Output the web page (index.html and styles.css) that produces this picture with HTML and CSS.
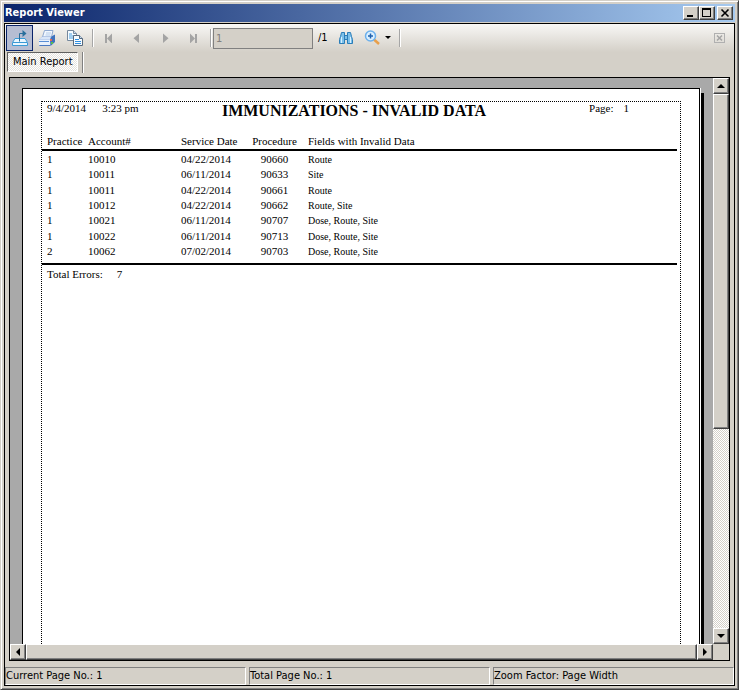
FILE: index.html
```html
<!DOCTYPE html>
<html lang="en">
<head>
    <meta charset="UTF-8">
    <meta name="viewport" content="width=device-width, initial-scale=1.0">
    <title>Report Viewer</title>
    <link rel="stylesheet" href="styles.css">
</head>
<body>
    <div class="window">
        <header class="titlebar">
            <h1>Report Viewer</h1>
            <div class="window-buttons">
                <button class="win-btn" aria-label="Minimize">
                    <svg width="12" height="10" shape-rendering="crispEdges"><rect x="2" y="7" width="6" height="2"/></svg>
                </button>
                <button class="win-btn" aria-label="Maximize">
                    <svg width="12" height="10" shape-rendering="crispEdges"><path d="M1 0h9v9h-9z M2 2v6h7v-6z" fill-rule="evenodd"/></svg>
                </button>
                <button class="win-btn close" aria-label="Close">
                    <svg width="12" height="10"><path d="M2.500 1.500l7 7M9.500 1.500l-7 7" stroke="#000" stroke-width="1.600"/></svg>
                </button>
            </div>
        </header>

        <main class="client">
            <!-- Toolbar -->
            <div class="toolbar">
                <button class="tool active" aria-label="Export Report">
                    <svg width="18" height="18" viewBox="0 0 18 18">
                        <path d="M4 9.500h10l2.500 4v3h-15v-3z" fill="#eaf6ff" stroke="#3a9ad6"/>
                        <path d="M2 13.500h14" stroke="#3a9ad6"/>
                        <path d="M8.500 12.500v-8h4" fill="none" stroke="#2a6f9c"/>
                        <path d="M11.500 1l4 3.500-4 3.500z" fill="#2a6f9c"/>
                    </svg>
                </button>
                <button class="tool" aria-label="Print Report">
                    <svg width="18" height="18" viewBox="0 0 18 18">
                        <path d="M4.500 8l2-6.500h8.500l-1.500 6.500z" fill="#f2f8ff" stroke="#8fa9d0"/>
                        <path d="M8 4h5M7.500 6h5" stroke="#b4cbe8"/>
                        <path d="M1 10.500l3-3h9l3.500-1.500v7l-4 4h-11.500z" fill="#a9c0e6"/>
                        <path d="M1 10.500l3-2.500h8.500l-0.500 2.500z" fill="#d9e6f8"/>
                        <path d="M1 11h11v5h-11z" fill="#e9f1fb"/>
                        <path d="M1 12.500h10" stroke="#5a8fd4"/>
                        <path d="M1.500 16.500h10.500" stroke="#4a79c0"/>
                        <path d="M12 10.500l1.500-3 3.500-2v7.500l-4.500 4z" fill="#3f72bc"/>
                        <rect x="12" y="10" width="2" height="2" fill="#e86a50"/>
                        <rect x="13" y="13" width="2" height="2" fill="#58c050"/>
                    </svg>
                </button>
                <button class="tool" aria-label="Copy">
                    <svg width="18" height="18" viewBox="0 0 18 18">
                        <path d="M1.500 1.500h6l3 3v7h-9z" fill="#f6fbff" stroke="#76889c"/>
                        <path d="M7.500 1.500v3h3" fill="#c8dcf0" stroke="#76889c"/>
                        <path d="M3 5h3M3 7h5M3 9h5" stroke="#4a9fe0"/>
                        <path d="M7.500 6.500h6l3 3v7h-9z" fill="#f6fbff" stroke="#56687c"/>
                        <path d="M13.500 6.500v3h3" fill="#c8dcf0" stroke="#56687c"/>
                        <path d="M9 10.500h4M9 12.500h6M9 14.500h6" stroke="#2f8fe0"/>
                    </svg>
                </button>
                <span class="separator"></span>
                <button class="tool" aria-label="First Page" disabled>
                    <svg width="10" height="10"><path d="M2 1v9" stroke="#a4a4a4" stroke-width="2"/><path d="M8 0.500v10L3 5.500z" fill="#a4a4a4"/></svg>
                </button>
                <button class="tool" aria-label="Previous Page" disabled>
                    <svg width="10" height="10"><path d="M7 0.500v9.500L1.500 5.250z" fill="#a4a4a4"/></svg>
                </button>
                <button class="tool" aria-label="Next Page" disabled>
                    <svg width="10" height="10"><path d="M3 0.500v9.500l5.500-4.750z" fill="#a4a4a4"/></svg>
                </button>
                <button class="tool" aria-label="Last Page" disabled>
                    <svg width="10" height="10"><path d="M2 0.500v10l5-5z" fill="#a4a4a4"/><path d="M8 1v9" stroke="#a4a4a4" stroke-width="2"/></svg>
                </button>
                <span class="separator"></span>
                <input class="page-box" id="page" type="text" value="1" aria-label="Page number" disabled>
                <label class="page-total" for="page">/1</label>
                <button class="tool find" aria-label="Find Text">
                    <svg width="16" height="14" viewBox="0 0 16 14">
                        <path d="M3.500 1.500h3v3h3v-3h3l1 4 1 3v4h-5v-4h-3v4h-5v-4l1-3z" fill="#7cc0ea" stroke="#2b7db8"/>
                        <path d="M3.500 6v6M12.500 6v6" stroke="#d8f0ff"/>
                        <path d="M6.500 3v6M9.500 3v6" stroke="#2b7db8"/>
                    </svg>
                </button>
                <button class="tool zoom" aria-label="Zoom">
                    <svg width="17" height="16" viewBox="0 0 17 16">
                        <path d="M10 9.500l5 4.500" stroke="#e8a04c" stroke-width="2.500"/>
                        <circle cx="6.500" cy="6" r="5" fill="#dcf0ff" stroke="#6cb0ec" stroke-width="1.500"/>
                        <path d="M4 6h5M6.500 3.500v5" stroke="#1f62b0" stroke-width="1.500"/>
                    </svg>
                    <svg width="6" height="4"><path d="M0 0h6L3 3z"/></svg>
                </button>
                <span class="separator"></span>
                <button class="tool close-view" aria-label="Close View" disabled>
                    <svg width="11" height="10"><rect x="0.500" y="0.500" width="10" height="9" fill="none" stroke="#b0b0b0"/><path d="M3 2.500l5 5M8 2.500l-5 5" stroke="#a4a4a4" stroke-width="1.500"/></svg>
                </button>
            </div>

            <div class="tabs">
                <button class="tab">Main Report</button>
                <span class="tab-end"></span>
            </div>

            <!-- Report page and scrollbars -->
            <div class="viewer">
                <div class="canvas">
                    <div class="page">
                        <div class="sheet">
                            <div class="report-head">
                                <p class="printed"><span>9/4/2014</span><span>3:23 pm</span></p>
                                <h2>IMMUNIZATIONS - INVALID DATA</h2>
                                <p class="page-no"><span>Page:</span><span>1</span></p>
                            </div>
                            <table class="report">
                                <colgroup>
                                    <col class="col-practice">
                                    <col class="col-account">
                                    <col class="col-date">
                                    <col class="col-procedure">
                                    <col>
                                </colgroup>
                                <thead>
                                    <tr><th>Practice</th><th>Account#</th><th>Service Date</th><th class="center">Procedure</th><th>Fields with Invalid Data</th></tr>
                                </thead>
                                <tbody>
                                    <tr><td>1</td><td>10010</td><td>04/22/2014</td><td class="center">90660</td><td class="fields">Route</td></tr>
                                    <tr><td>1</td><td>10011</td><td>06/11/2014</td><td class="center">90633</td><td class="fields">Site</td></tr>
                                    <tr><td>1</td><td>10011</td><td>04/22/2014</td><td class="center">90661</td><td class="fields">Route</td></tr>
                                    <tr><td>1</td><td>10012</td><td>04/22/2014</td><td class="center">90662</td><td class="fields">Route, Site</td></tr>
                                    <tr><td>1</td><td>10021</td><td>06/11/2014</td><td class="center">90707</td><td class="fields">Dose, Route, Site</td></tr>
                                    <tr><td>1</td><td>10022</td><td>06/11/2014</td><td class="center">90713</td><td class="fields">Dose, Route, Site</td></tr>
                                    <tr><td>2</td><td>10062</td><td>07/02/2014</td><td class="center">90703</td><td class="fields">Dose, Route, Site</td></tr>
                                </tbody>
                            </table>
                            <p class="total"><span>Total Errors:</span><span>7</span></p>
                        </div>
                    </div>
                </div>
                <div class="scroll-y">
                    <button class="scroll-btn" aria-label="Scroll up"><svg width="8" height="4"><path d="M4 0l4 4H0z"/></svg></button>
                    <div class="thumb"></div>
                    <div class="track"></div>
                    <button class="scroll-btn" aria-label="Scroll down"><svg width="8" height="4"><path d="M0 0h8L4 4z"/></svg></button>
                </div>
                <div class="scroll-x">
                    <button class="scroll-btn" aria-label="Scroll left"><svg width="4" height="8"><path d="M4 0v8L0 4z"/></svg></button>
                    <div class="thumb"></div>
                    <button class="scroll-btn" aria-label="Scroll right"><svg width="4" height="8"><path d="M0 0l4 4-4 4z"/></svg></button>
                </div>
            </div>

            <footer class="statusbar">
                <span>Current Page No.: 1</span>
                <span>Total Page No.: 1</span>
                <span>Zoom Factor: Page Width</span>
            </footer>
        </main>
    </div>
</body>
</html>
```
FILE: styles.css
```css
* {
    box-sizing: border-box;
}

body {
    margin: 0;
    background-color: #d4d0c8;
    color: #000;
    font-family: "DejaVu Sans Condensed", "DejaVu Sans", sans-serif;
    font-size: 11px;
    line-height: 14px;
}

h1, h2, p {
    margin: 0;
    font-size: 11px;
}

button {
    display: flex;
    align-items: center;
    justify-content: center;
    flex: none;
    margin: 0;
    padding: 0;
    border: none;
    background: none;
    color: #000;
    font: inherit;
}

.window {
    display: flex;
    flex-direction: column;
    height: 100vh;
    padding: 3px 3px 2px 3px;
    border: 1px solid #d4d0c8;
    border-right: 1px solid #404040;
    border-bottom: 1px solid #404040;
    box-shadow: inset 1px 1px #fff, inset -1px -1px #808080;
}

/* Title bar */
.titlebar {
    display: flex;
    align-items: center;
    justify-content: space-between;
    flex: none;
    height: 18px;
    margin-bottom: 1px;
    padding: 0 2px 0 1px;
    background: linear-gradient(to right, #0a246a, #a6caf0);
}

.titlebar h1 {
    color: #fff;
    font-weight: bold;
}

.window-buttons {
    display: flex;
}

.win-btn,
.scroll-btn,
.thumb {
    background-color: #d4d0c8;
    border: 1px solid;
    border-color: #fff #404040 #404040 #fff;
    box-shadow: inset -1px -1px #808080;
}

.win-btn {
    width: 16px;
    height: 14px;
}

.win-btn.close {
    margin-left: 2px;
}

.client {
    display: flex;
    flex-direction: column;
    flex: 1;
    min-height: 0;
    margin-bottom: 1px;
    border: 1px solid #000;
}

/* Toolbar */
.toolbar {
    display: flex;
    align-items: center;
    flex: none;
    height: 28px;
    padding: 0 9px 0 1px;
    background: linear-gradient(#f8f7f5, #d4d0c8);
}

.tool {
    width: 28px;
    height: 26px;
}

.tool.active {
    width: 27px;
    background-color: #b6bdd2;
    border: 1px solid #0a246a;
}

.separator {
    width: 2px;
    height: 18px;
    margin: 0 1px 0 3px;
    background: linear-gradient(to right, #a6a6a6 50%, #fff 50%);
}

.page-box {
    width: 100px;
    height: 21px;
    padding: 0 2px;
    border: 1px solid #808080;
    background-color: #d4d0c8;
    color: #808080;
    font: inherit;
}

.page-total {
    margin: 0 4px 0 5px;
}

.tool.zoom {
    gap: 4px;
    width: 36px;
}

.close-view {
    width: 11px;
    margin-left: auto;
}

/* Report tabs */
.tabs {
    display: flex;
    flex: none;
    gap: 4px;
    height: 25px;
    padding-left: 2px;
}

.tab {
    height: 20px;
    padding: 0 4px 0 5px;
    border: 1px solid;
    border-color: #606060 #fff #fff #606060;
    background: repeating-conic-gradient(#fff 0 25%, #e4e2dd 0 50%) 0 0 / 2px 2px;
}

.tab-end {
    width: 2px;
    height: 21px;
    background: linear-gradient(to right, #808080 50%, #fff 50%);
}

/* Viewer */
.viewer {
    display: grid;
    grid-template-columns: 1fr 16px;
    grid-template-rows: 1fr 16px;
    flex: 1;
    min-height: 0;
    margin: 0 4px;
    border: 1px solid #000;
}

.canvas {
    display: flex;
    min-height: 0;
    padding: 10px 13px 0 12px;
    overflow: hidden;
    background-color: #a9a9a9;
}

.page {
    flex: 1;
    min-width: 0;
    padding: 12px 18px 0 18px;
    border: 1px solid #000;
    border-bottom: none;
    background-color: #fff;
    box-shadow: 1px 0 #fff, 4px 5px #000;
}

.sheet {
    height: 100%;
    border: 1px dotted #000;
    border-bottom: none;
    font-family: "Liberation Serif", "Times New Roman", serif;
}

.report-head {
    display: grid;
    grid-template-columns: 1fr auto 1fr;
    padding: 0 19px 0 5px;
    line-height: 13px;
}

.report-head h2 {
    font-size: 16px;
    font-weight: bold;
    line-height: 18px;
}

.printed {
    display: flex;
    gap: 16px;
}

.page-no {
    display: flex;
    justify-content: flex-end;
    gap: 10px;
    padding-right: 32px;
}

.report {
    width: calc(100% - 3px);
    height: 131px;
    margin-top: 14px;
    padding-bottom: 5px;
    border-collapse: separate;
    border-spacing: 0;
    border-bottom: 2px solid #000;
    table-layout: fixed;
}

.report th,
.report td {
    padding: 0 0 0 5px;
    overflow: hidden;
    font-weight: normal;
    text-align: left;
    white-space: nowrap;
}

.report th {
    height: 17px;
    border-bottom: 2px solid #000;
    vertical-align: top;
}

.report td {
    padding-top: 2px;
    line-height: 13px;
}

.report .center {
    padding-left: 0;
    text-align: center;
}

.report .fields {
    font-size: 10px;
}

.col-practice {
    width: 41px;
}

.col-account {
    width: 93px;
}

.col-date {
    width: 70px;
}

.col-procedure {
    width: 57px;
}

.total {
    display: flex;
    gap: 14px;
    padding: 2px 5px;
}

/* Scrollbars */
.scroll-y {
    display: flex;
    flex-direction: column;
}

.scroll-x {
    display: flex;
}

.scroll-btn {
    width: 16px;
    height: 16px;
}

.thumb {
    flex: 1;
}

.scroll-y .thumb {
    flex: 5;
}

.track {
    flex: 3;
    background: repeating-conic-gradient(#fff 0 25%, #d4d0c8 0 50%) 0 0 / 2px 2px;
}

/* Status bar */
.statusbar {
    display: grid;
    grid-template-columns: repeat(3, 1fr);
    flex: none;
    gap: 3px;
    height: 24px;
    padding-top: 6px;
}

.statusbar span {
    padding: 1px 0;
    border: 1px solid;
    border-color: #808080 #fff #fff #808080;
}
```
